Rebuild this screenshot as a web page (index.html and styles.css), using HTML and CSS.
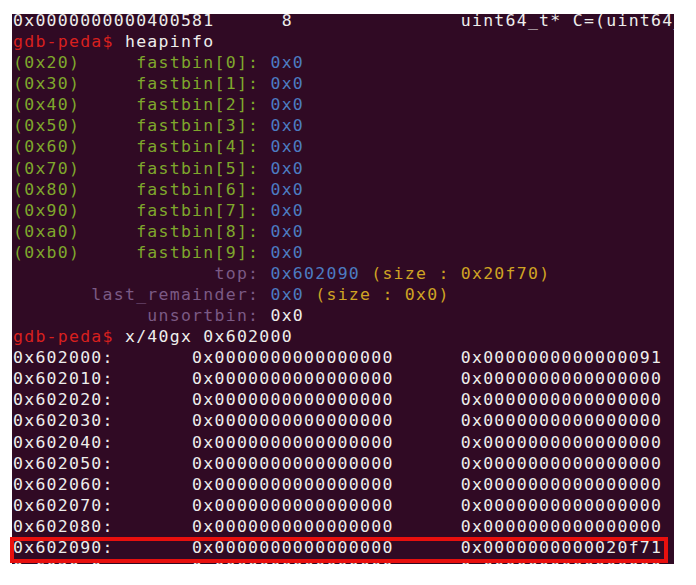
FILE: index.html
```html
<!DOCTYPE html>
<html>
<head>
<meta charset="utf-8">
<link rel="stylesheet" href="styles.css">
</head>
<body>
<div class="shot">
  <div class="term">
    <div class="lines">
<div class="ln w">0x0000000000400581      8               uint64_t* C=(uint64_t*) malloc(0x10);</div>
<div class="ln"><span class="r">gdb-peda$ </span><span class="w">heapinfo</span></div>
<div class="ln"><span class="g">(0x20)     fastbin[0]: </span><span class="b">0x0</span></div>
<div class="ln"><span class="g">(0x30)     fastbin[1]: </span><span class="b">0x0</span></div>
<div class="ln"><span class="g">(0x40)     fastbin[2]: </span><span class="b">0x0</span></div>
<div class="ln"><span class="g">(0x50)     fastbin[3]: </span><span class="b">0x0</span></div>
<div class="ln"><span class="g">(0x60)     fastbin[4]: </span><span class="b">0x0</span></div>
<div class="ln"><span class="g">(0x70)     fastbin[5]: </span><span class="b">0x0</span></div>
<div class="ln"><span class="g">(0x80)     fastbin[6]: </span><span class="b">0x0</span></div>
<div class="ln"><span class="g">(0x90)     fastbin[7]: </span><span class="b">0x0</span></div>
<div class="ln"><span class="g">(0xa0)     fastbin[8]: </span><span class="b">0x0</span></div>
<div class="ln"><span class="g">(0xb0)     fastbin[9]: </span><span class="b">0x0</span></div>
<div class="ln"><span class="p">                  top: </span><span class="b">0x602090</span><span class="y"> (size : 0x20f70)</span></div>
<div class="ln"><span class="p">       last_remainder: </span><span class="b">0x0</span><span class="y"> (size : 0x0)</span></div>
<div class="ln"><span class="p">            unsortbin: </span><span class="w">0x0</span></div>
<div class="ln"><span class="r">gdb-peda$ </span><span class="w">x/40gx 0x602000</span></div>
<div class="ln w">0x602000:       0x0000000000000000      0x0000000000000091</div>
<div class="ln w">0x602010:       0x0000000000000000      0x0000000000000000</div>
<div class="ln w">0x602020:       0x0000000000000000      0x0000000000000000</div>
<div class="ln w">0x602030:       0x0000000000000000      0x0000000000000000</div>
<div class="ln w">0x602040:       0x0000000000000000      0x0000000000000000</div>
<div class="ln w">0x602050:       0x0000000000000000      0x0000000000000000</div>
<div class="ln w">0x602060:       0x0000000000000000      0x0000000000000000</div>
<div class="ln w">0x602070:       0x0000000000000000      0x0000000000000000</div>
<div class="ln w">0x602080:       0x0000000000000000      0x0000000000000000</div>
<div class="ln w">0x602090:       0x0000000000000000      0x0000000000020f71</div>
<div class="ln w">0x6020a0:       0x0000000000000000      0x0000000000000000</div>
    </div>
  </div>
  <div class="mark"></div>
</div>
</body>
</html>
```
FILE: styles.css
```css
html, body {
  margin: 0;
  padding: 0;
  background: #ffffff;
}

.shot {
  position: relative;
  width: 662px;
  margin: 14px 0 0 12px;
}

.term {
  width: 662px;
  height: 550px;
  background: #300a24;
  overflow: hidden;
}

.lines {
  margin-top: -4px;
  padding-left: 1px;
  font-family: "DejaVu Sans Mono", monospace;
  font-size: 16.5px;
  letter-spacing: 1.26px;
  line-height: 21.08px;
}

.ln {
  height: 21.08px;
  white-space: pre;
}

.w { color: #eeeeec; }
.r { color: #d8201e; }
.g { color: #7fa72c; }
.b { color: #4c7cc2; }
.y { color: #cfa323; }
.p { color: #7b5a85; }

.mark {
  position: absolute;
  left: -2px;
  top: 523px;
  width: 650px;
  height: 18px;
  border: 4px solid #e8100e;
}
```
